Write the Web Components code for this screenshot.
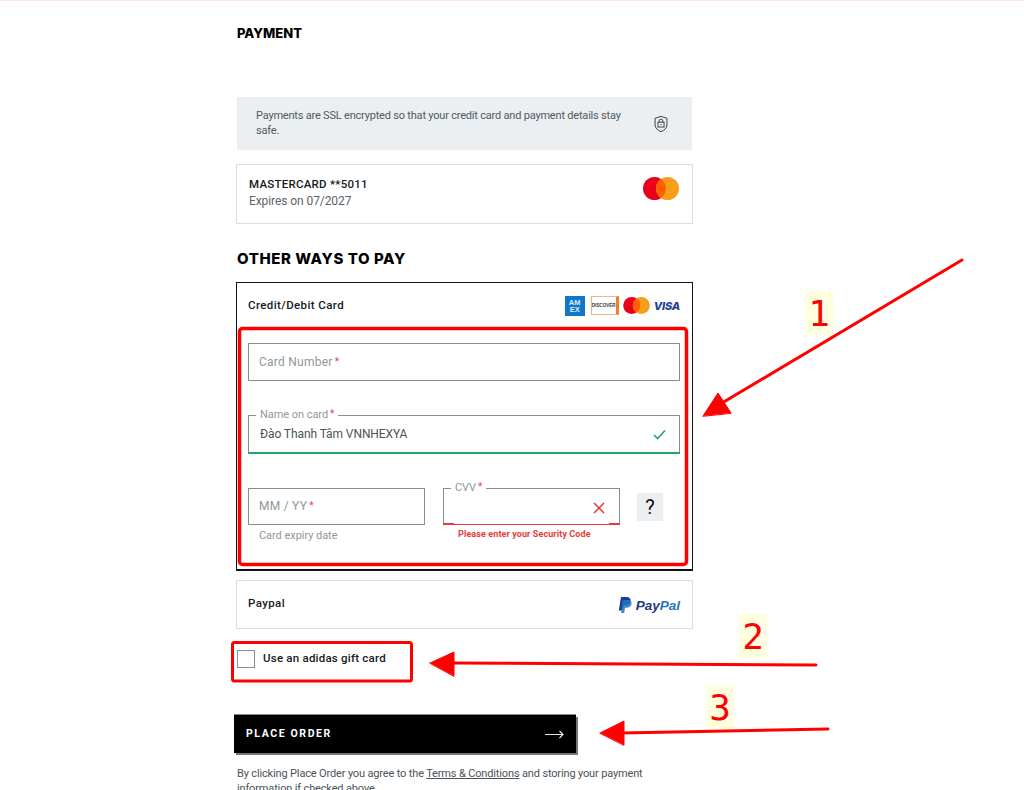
<!DOCTYPE html>
<html lang="en">
<head>
<meta charset="utf-8">
<title>Payment</title>
<style>
    html, body { margin: 0; padding: 0; background: #fff; }
    body { width: 1024px; height: 790px; overflow: hidden; position: relative; font-family: Roboto, "Liberation Sans", sans-serif; color: #000; }
</style>
</head>
<body>
<checkout-page>
    <section-title style="--top: 25px; --size: 13px; --spacing: 0">PAYMENT</section-title>
    <info-note>Payments are SSL encrypted so that your credit card and payment details stay safe.</info-note>
    <saved-card></saved-card>
    <section-title style="--top: 27px; --size: 15px; --spacing: .58px">OTHER WAYS TO PAY</section-title>
    <card-form></card-form>
    <paypal-option></paypal-option>
    <gift-check>Use an adidas gift card</gift-check>
    <place-order>PLACE ORDER</place-order>
    <terms-note></terms-note>
</checkout-page>
<mark-up></mark-up>

<script>
class CheckoutPage extends HTMLElement {
    constructor () {
        super();
        this.attachShadow({mode: "open"});
    }

    connectedCallback () {
        this.shadowRoot.innerHTML = `
        <style>
            :host { display: block; border-top: 1px solid #fde3ea; padding-left: 236px; }
        </style>
        <slot></slot>
        `;
    }
}

class SectionTitle extends HTMLElement {
    constructor () {
        super();
        this.attachShadow({mode: "open"});
        this.shadowRoot.innerHTML = `
        <style>
            :host { display: block; padding: var(--top) 0 0 1px; font: 800 var(--size)/15px Inter, "Liberation Sans", sans-serif; letter-spacing: var(--spacing); color: #000; }
        </style>
        <slot></slot>
        `;
    }
}

class InfoNote extends HTMLElement {
    constructor () {
        super();
        this.attachShadow({mode: "open"});
        this.shadowRoot.innerHTML = `
        <style>
            :host { display: flex; align-items: center; justify-content: space-between; box-sizing: border-box; margin: 56px 0 14px 1px; width: 455px; height: 53px; padding: 0 23px 2px 19px; background: #eceff1; font-size: 11px; line-height: 15px; letter-spacing: -.2px; color: #4f5a63; }
            div { width: 375px; }
            svg { display: block; margin-top: 3px; }
        </style>
        <div><slot></slot></div>
        <svg width="16" height="18" viewBox="0 0 16 20" fill="none" stroke="#3a4348" stroke-width="1.1">
            <path d="M8 1.5 14.6 3.6V11C14.6 14.6 11.6 17 8 18.6 4.4 17 1.4 14.6 1.4 11V3.6Z"/>
            <rect x="4.6" y="8" width="6.8" height="5.4"/>
            <path d="M6 8V6.6a2 2 0 0 1 4 0V8"/>
            <path d="M8 10v1.4"/>
        </svg>
        `;
    }
}

class McLogo extends HTMLElement {
    constructor () {
        super();
        this.attachShadow({mode: "open"});
        this.shadowRoot.innerHTML = `
        <style>
            :host { display: block; line-height: 0; }
        </style>
        <svg width="${this.getAttribute("w")}" height="${this.getAttribute("h")}" viewBox="0 0 36 23">
            <circle cx="11.5" cy="11.5" r="11.5" fill="#eb001b"/>
            <circle cx="24.5" cy="11.5" r="11.5" fill="#f79e1b"/>
            <path d="M18 2a11.5 11.5 0 0 1 0 19 11.5 11.5 0 0 1 0-19Z" fill="#ff5f00"/>
        </svg>
        `;
    }
}

class SavedCard extends HTMLElement {
    constructor () {
        super();
        this.attachShadow({mode: "open"});
        this.shadowRoot.innerHTML = `
        <style>
            :host { display: flex; justify-content: space-between; box-sizing: border-box; width: 457px; height: 60px; padding: 12px 13px 0 12px; border: 1px solid #dcdfe0; }
            .name { margin-top: -1px; font-size: 11.5px; font-weight: 500; line-height: 16px; letter-spacing: .25px; color: #15191c; }
            .exp { margin-top: 1px; font-size: 12px; line-height: 17px; letter-spacing: -.08px; color: #5a6469; }
        </style>
        <div>
            <div class="name">MASTERCARD **5011</div>
            <div class="exp">Expires on 07/2027</div>
        </div>
        <mc-logo w="36" h="23"></mc-logo>
        `;
    }
}

class CardForm extends HTMLElement {
    constructor () {
        super();
        this.attachShadow({mode: "open"});
        this.shadowRoot.innerHTML = `
        <style>
            :host { display: block; box-sizing: border-box; margin-top: 16px; width: 457px; height: 289px; padding: 0 12px 0 11px; border: 1px solid #111; border-bottom-width: 2px; }
            header { display: flex; align-items: center; justify-content: space-between; height: 45px; margin-bottom: 15px; }
            h3 { margin: 0 0 2px; font-size: 11.5px; font-weight: 500; letter-spacing: .4px; color: #15191c; }
            .logos { display: flex; align-items: center; gap: 5px; }
            .amex { display: flex; align-items: center; justify-content: center; width: 20px; height: 20px; background: #0f78ca; color: #dcecf8; font: 700 7.5px/7px "Liberation Sans", sans-serif; text-align: center; }
            .discover { display: flex; align-items: center; justify-content: center; box-sizing: border-box; width: 28px; height: 19px; margin: 0 -1px 0 1px; border: 1px solid #f3b48c; border-right: 3px solid #f27e2a; color: #3b3b3b; font: 700 4.6px "Liberation Sans", sans-serif; }
            .visa { margin-left: -1px; font: italic 800 11px Inter, "Liberation Sans", sans-serif; letter-spacing: -.2px; color: #23409a; }
            .row { display: grid; grid-template-columns: 177px 177px 26px; column-gap: 18px; margin-top: 34px; }
            text-field[name] { margin-top: 34px; }
            .help { grid-column: 3; align-self: start; display: flex; align-items: center; justify-content: center; width: 26px; height: 28px; margin: 5px 0 0 -1px; background: #eceff1; font-size: 20px; font-weight: 400; color: #111; }
        </style>
        <header>
            <h3>Credit/Debit Card</h3>
            <div class="logos">
                <div class="amex">AM<br>EX</div>
                <div class="discover">DISCOVER</div>
                <mc-logo w="27" h="17"></mc-logo>
                <div class="visa">VISA</div>
            </div>
        </header>
        <text-field label="Card Number" style="--h: 38px"></text-field>
        <text-field name label="Name on card" value="Đào Thanh Tâm VNNHEXYA" state="ok" style="--h: 39px"></text-field>
        <div class="row">
            <text-field label="MM / YY" hint="Card expiry date" style="--h: 37px; --pb: 2px"></text-field>
            <text-field label="CVV" state="bad" error="Please enter your Security Code" style="--h: 37px"></text-field>
            <div class="help">?</div>
        </div>
        `;
    }
}

class TextField extends HTMLElement {
    constructor () {
        super();
        this.attachShadow({mode: "open"});
    }

    connectedCallback () {
        this.render();
    }

    render () {
        let state = this.getAttribute("state") || "";
        let value = this.getAttribute("value") || "";
        let hint = this.getAttribute("hint");
        let error = this.getAttribute("error");
        let floated = state != "";
        let icon = "";

        if(state == "ok")
            icon = `<svg class="icon" width="13" height="11" viewBox="0 0 13 11" fill="none" stroke="#1fa865" stroke-width="1.5"><path d="M1 6 4.6 9.6 12 1.4"/></svg>`;
        if(state == "bad")
            icon = `<svg class="icon" width="12" height="12" viewBox="0 0 12 12" fill="none" stroke="#e63b3b" stroke-width="1.5"><path d="M1 1 11 11M11 1 1 11"/></svg>`;

        this.shadowRoot.innerHTML = `
        <style>
            :host { display: block; position: relative; }
            .box { position: relative; display: flex; align-items: center; box-sizing: border-box; height: var(--h); padding: ${state == "bad" ? "2px" : "0"} ${state == "bad" ? "14px" : "13px"} var(--pb, 0) ${floated ? "11px" : "10px"}; border: 1px solid #8a8d8f; ${state == "ok" ? "border-bottom: 2px solid #1fa865;" : ""} ${state == "bad" ? "border-bottom: 1px solid #e63b3b;" : ""} }
            .label { font-size: 12px; letter-spacing: .25px; color: #8f979b; }
            .label.up { position: absolute; left: 7px; top: -8px; padding: 0 4px; background: #fff; font-size: 11px; line-height: 13px; letter-spacing: -.05px; }
            .label i { font-style: normal; font-size: 10px; margin-left: 2px; position: relative; top: -1px; color: #e6404a; }
            .value { flex: 1; font-size: 12px; letter-spacing: -.08px; color: #4a5358; }
            .tick { position: absolute; bottom: -1px; width: 11px; height: 2px; background: #e63b3b; }
            .hint { margin: 4px 0 0 11px; font-size: 11px; line-height: 13px; letter-spacing: -.05px; color: #8f979b; }
            .error { margin: 3px 0 0 15px; font-size: 9px; font-weight: 700; line-height: 12px; letter-spacing: .1px; color: #e63b3b; }
            .icon { display: block; margin-left: auto; }
        </style>
        <div class="box">
            <span class="label ${floated ? "up" : ""}">${this.getAttribute("label")}<i>*</i></span>
            ${value != "" ? `<span class="value">${value}</span>` : ""}
            ${icon}
            ${state == "bad" ? `<span class="tick" style="left:-1px"></span><span class="tick" style="right:-1px"></span>` : ""}
        </div>
        ${hint ? `<div class="hint">${hint}</div>` : ""}
        ${error ? `<div class="error">${error}</div>` : ""}
        `;
    }
}

class PaypalOption extends HTMLElement {
    constructor () {
        super();
        this.attachShadow({mode: "open"});
        this.shadowRoot.innerHTML = `
        <style>
            :host { display: flex; align-items: center; justify-content: space-between; box-sizing: border-box; margin-top: 9px; width: 457px; height: 49px; padding: 0 12px 2px 11px; border: 1px solid #dcdfe0; }
            span { margin-bottom: 2px; font-size: 11.5px; font-weight: 500; letter-spacing: .4px; color: #15191c; }
            .logo { display: flex; align-items: center; gap: 4px; margin-top: 3px; }
            b { font: italic 700 13.5px "Liberation Sans", sans-serif; color: #1f3a78; }
            b em { color: #1f75c4; }
        </style>
        <span>Paypal</span>
        <div class="logo">
            <svg width="14" height="16" viewBox="0 0 14 16">
                <path d="M3 0H8.5C11.5 0 13 1.7 12.5 4.3 12 7.2 10 8.6 7.2 8.6H5.4L4.5 13.6H.8Z" fill="#1b3f8f"/>
                <path d="M4.6 3H9.4C12.2 3 14 4.4 13.5 7 13 9.6 11 10.8 8.6 10.8H7L6.2 16H3.2Z" fill="#1f75c4" opacity=".85"/>
            </svg>
            <b>Pay<em>Pal</em></b>
        </div>
        `;
    }
}

class GiftCheck extends HTMLElement {
    constructor () {
        super();
        this.attachShadow({mode: "open"});
        this.shadowRoot.innerHTML = `
        <style>
            :host { display: flex; align-items: flex-start; gap: 8px; margin: 21px 0 0 1px; font-size: 11.5px; font-weight: 500; line-height: 15px; letter-spacing: .22px; color: #15191c; }
            i { display: block; box-sizing: border-box; width: 18px; height: 18px; border: 1px solid #8a8d8f; }
            span { padding-top: 1px; }
        </style>
        <i></i><span><slot></slot></span>
        `;
    }
}

class PlaceOrder extends HTMLElement {
    constructor () {
        super();
        this.attachShadow({mode: "open"});
        this.shadowRoot.innerHTML = `
        <style>
            :host { display: flex; align-items: center; justify-content: space-between; box-sizing: border-box; margin: 47px 0 0 -2px; width: 342px; height: 38px; padding: 0 12px 2px 12px; background: #000; box-shadow: 2px 2px 0 #777, 0 -1px 0 #888; font-size: 10.5px; font-weight: 700; letter-spacing: 1.6px; color: #fff; }
            svg { display: block; margin-top: 3px; }
        </style>
        <slot></slot>
        <svg width="19" height="9" viewBox="0 0 19 9" fill="none" stroke="#e8e8e8" stroke-width="1.2"><path d="M0 4.5H18M14.5 1 18 4.5 14.5 8"/></svg>
        `;
    }
}

class TermsNote extends HTMLElement {
    constructor () {
        super();
        this.attachShadow({mode: "open"});
        this.shadowRoot.innerHTML = `
        <style>
            :host { display: block; margin: 13px 0 0 1px; width: 420px; font-size: 11px; line-height: 15px; letter-spacing: -.15px; color: #4a5358; }
            a { color: inherit; text-decoration: underline; }
        </style>
        By clicking Place Order you agree to the <a>Terms &amp; Conditions</a> and storing your payment information if checked above.
        `;
    }
}

// red notes drawn on top of the screenshot
class MarkUp extends HTMLElement {
    constructor () {
        super();
        this.attachShadow({mode: "open"});
        this.shadowRoot.innerHTML = `
        <style>
            :host { display: block; position: absolute; left: 0; top: 0; width: 1024px; height: 790px; pointer-events: none; }
            svg { position: absolute; left: 0; top: 0; }
            span { position: absolute; display: flex; align-items: center; justify-content: center; width: 28px; height: 44px; background: #ffffe0; color: #f00; font: 36px "DejaVu Sans Mono", monospace; }
        </style>
        <svg width="1024" height="790" fill="none" stroke="#f00" stroke-linecap="round" stroke-linejoin="round">
            <rect x="239.500" y="328.500" width="447" height="236" rx="3" stroke-width="3.500"/>
            <rect x="232.500" y="642.500" width="179" height="38.500" rx="2" stroke-width="3"/>
            <path d="M962 260 722 403" stroke-width="3"/>
            <path d="M816 665 452 663" stroke-width="3"/>
            <path d="M828 729 622 733" stroke-width="3"/>
            <path d="M703 416 718 393 731 413Z M430 663 454 652V676Z M600 733 624 721V745Z" fill="#f00" stroke-width="1"/>
        </svg>
        <span style="left:805px;top:291px">1</span>
        <span style="left:739px;top:614px">2</span>
        <span style="left:706px;top:685px">3</span>
        `;
    }
}

customElements.define("mc-logo", McLogo);
customElements.define("section-title", SectionTitle);
customElements.define("info-note", InfoNote);
customElements.define("saved-card", SavedCard);
customElements.define("text-field", TextField);
customElements.define("card-form", CardForm);
customElements.define("paypal-option", PaypalOption);
customElements.define("gift-check", GiftCheck);
customElements.define("place-order", PlaceOrder);
customElements.define("terms-note", TermsNote);
customElements.define("mark-up", MarkUp);
customElements.define("checkout-page", CheckoutPage);
</script>
</body>
</html>
